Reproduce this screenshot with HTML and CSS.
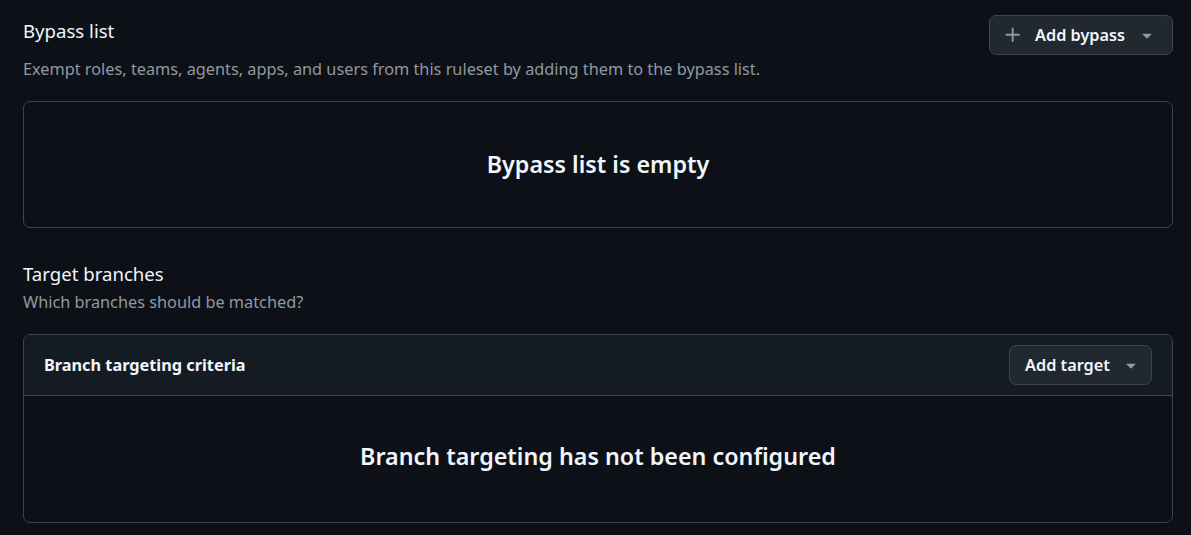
FILE: index.html
```html
<!DOCTYPE html>
<html lang="en">
<head>
<meta charset="utf-8">
<title>Ruleset</title>
<link rel="stylesheet" href="styles.css">
</head>
<body>
<main class="page">
  <section class="bypass">
    <div class="subhead">
      <div class="subhead-text">
        <h2 class="title">Bypass list</h2>
        <p class="desc desc-first">Exempt roles, teams, agents, apps, and users from this ruleset by adding them to the bypass list.</p>
      </div>
      <button class="btn btn-bypass" type="button">
        <svg class="icon-plus" viewBox="0 0 16 16" width="20" height="20" aria-hidden="true"><path d="M7.75 2a.75.75 0 0 1 .75.75V7h4.25a.75.75 0 0 1 0 1.5H8.5v4.25a.75.75 0 0 1-1.5 0V8.5H2.750a.75.75 0 0 1 0-1.5H7V2.75A.75.75 0 0 1 7.75 2Z"/></svg>
        <span class="btn-label">Add bypass</span>
        <svg class="icon-caret" viewBox="0 0 16 16" width="20" height="20" aria-hidden="true"><path d="m4.427 7.427 3.396 3.396a.25.25 0 0 0 .354 0l3.396-3.396A.25.25 0 0 0 11.396 7H4.604a.25.25 0 0 0-.177.427Z"/></svg>
      </button>
    </div>
    <div class="empty-box">
      <h3 class="empty-title">Bypass list is empty</h3>
    </div>
  </section>

  <section class="targets">
    <h2 class="title">Target branches</h2>
    <p class="desc">Which branches should be matched?</p>
    <div class="panel">
      <div class="panel-header">
        <span class="panel-title">Branch targeting criteria</span>
        <button class="btn btn-target" type="button">
          <span class="btn-label">Add target</span>
          <svg class="icon-caret" viewBox="0 0 16 16" width="20" height="20" aria-hidden="true"><path d="m4.427 7.427 3.396 3.396a.25.25 0 0 0 .354 0l3.396-3.396A.25.25 0 0 0 11.396 7H4.604a.25.25 0 0 0-.177.427Z"/></svg>
        </button>
      </div>
      <div class="panel-body">
        <h3 class="empty-title">Branch targeting has not been configured</h3>
      </div>
    </div>
  </section>
</main>
</body>
</html>
```

FILE: styles.css
```css
html, body {
  margin: 0;
  padding: 0;
  background: #0d1117;
}

body {
  font-family: "Noto Sans", "Liberation Sans", sans-serif;
  color: #f0f6fc;
}

.page {
  padding: 15px 18px 0 23px;
}

.subhead {
  display: flex;
  justify-content: space-between;
  align-items: flex-start;
}

.title {
  margin: 0;
  font-size: 18.6px;
  line-height: 30px;
  font-weight: 400;
  color: #f0f6fc;
}

.bypass .title {
  margin-top: 1px;
}

.desc {
  margin: 0;
  font-size: 16.3px;
  line-height: 26px;
  color: #9198a1;
}

.desc-first {
  margin-top: 10px;
}

.btn {
  display: flex;
  align-items: center;
  height: 40px;
  box-sizing: border-box;
  background: #212830;
  border: 1px solid #3d444d;
  border-radius: 7px;
  color: #f0f6fc;
  font-family: inherit;
  font-size: 16.3px;
  font-weight: 600;
  cursor: pointer;
}

.btn svg {
  fill: #9198a1;
  flex: none;
}

.btn-bypass {
  width: 184px;
  padding: 0 15px 0 13px;
}

.btn-bypass .btn-label {
  margin-left: 12px;
}

.btn-bypass .icon-caret {
  margin-left: auto;
}

.btn-target {
  width: 143px;
  padding: 0 10px 0 15px;
}

.btn-target .icon-caret {
  margin-left: auto;
}

.empty-box {
  margin-top: 19px;
  height: 127px;
  box-sizing: border-box;
  border: 1px solid #3d444d;
  border-radius: 7px;
  display: flex;
  align-items: center;
  justify-content: center;
  padding-bottom: 2px;
}

.empty-title {
  margin: 0;
  font-size: 23.3px;
  line-height: 36px;
  font-weight: 600;
  color: #f0f6fc;
}

.targets {
  margin-top: 31px;
}

.panel {
  margin-top: 19px;
  border: 1px solid #3d444d;
  border-radius: 7px;
  overflow: hidden;
}

.panel-header {
  display: flex;
  align-items: center;
  justify-content: space-between;
  background: #151b23;
  padding: 10px 20px;
  border-bottom: 1px solid #3d444d;
}

.panel-title {
  font-size: 16.3px;
  font-weight: 700;
  color: #f0f6fc;
}

.panel-body {
  height: 126px;
  box-sizing: border-box;
  padding-bottom: 7px;
  display: flex;
  align-items: center;
  justify-content: center;
}
```
